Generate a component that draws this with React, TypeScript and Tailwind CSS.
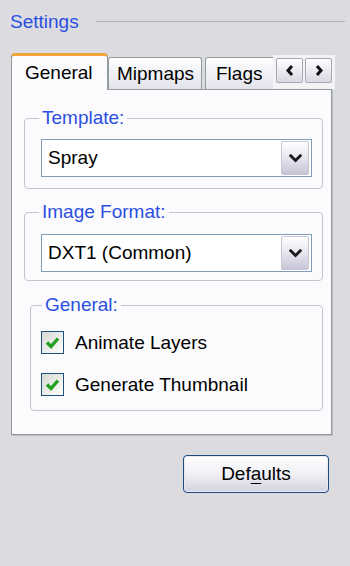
import React from "react";

function Chevron() {
  return (
    <svg width="13" height="9" viewBox="0 0 13 9">
      <path d="M1.8 1.8 L6.5 6.5 L11.2 1.8" fill="none" stroke="#1b1b1b" strokeWidth="2.8" strokeLinecap="square" />
    </svg>
  );
}

function Combo({ value }: { value: string }) {
  return (
    <div className="h-[38px] border border-[#7f9db9] bg-white flex items-center">
      <span className="flex-1 pl-[6px]">{value}</span>
      <div className="w-[28px] h-[34px] mr-[2px] rounded-[2px] border border-[#c6c6d6] bg-gradient-to-b from-[#ffffff] via-[#e6e6ef] to-[#c5c5d6] flex items-center justify-center">
        <Chevron />
      </div>
    </div>
  );
}

function Check({ label }: { label: string }) {
  return (
    <div className="flex items-center h-[23px]">
      <div className="w-[23px] h-[23px] border border-[#1c5180] bg-gradient-to-br from-[#d8d8d2] to-[#ffffff] flex items-center justify-center">
        <svg width="17" height="15" viewBox="0 0 17 15">
          <path d="M3 7.5 L7 11.5 L14 3.5" fill="none" stroke="#21a121" strokeWidth="3.4" />
        </svg>
      </div>
      <span className="ml-[11px]">{label}</span>
    </div>
  );
}

function ArrowBtn({ dir }: { dir: "l" | "r" }) {
  return (
    <div className="w-[27px] h-[25px] rounded-[2px] border border-[#a7a6b2] bg-gradient-to-b from-[#ffffff] to-[#d9d9e3] flex items-center justify-center">
      <svg width="10" height="13" viewBox="0 0 10 13">
        {dir === "l" ? (
          <path d="M7 2 L3 6.5 L7 11" fill="none" stroke="#111" strokeWidth="3" strokeLinejoin="miter" />
        ) : (
          <path d="M3 2 L7 6.5 L3 11" fill="none" stroke="#111" strokeWidth="3" strokeLinejoin="miter" />
        )}
      </svg>
    </div>
  );
}

export default function App() {
  return (
    <div className="w-[350px] h-[566px] bg-[#dcdce0] font-['Liberation_Sans',Arial,sans-serif] text-[19px] leading-[22px] text-black overflow-hidden">
      {/* header */}
      <div className="flex items-start pt-[11px] pl-[10px]">
        <span className="text-[#2b4fe0]">Settings</span>
        <div className="flex-1 h-px bg-[#b0b0b6] mt-[10px] ml-[17px] mr-[5px]" />
      </div>

      {/* tabs */}
      <div className="relative z-10 mt-[20px] -mb-px ml-[11px] w-[321px] h-[37px] flex items-end">
        <div className="w-[97px] h-[37px] bg-[#fbfbfd] border-x border-x-[#919b9c] border-t-[3px] border-t-[#f0a439] rounded-t-[4px] pl-[13px] pt-[6px]">
          General
        </div>
        <div className="w-[94px] h-[32px] mb-px border-x border-t border-[#919b9c] rounded-t-[3px] bg-gradient-to-b from-[#ffffff] to-[#e3e3ec] pl-[8px] pt-[5px]">
          Mipmaps
        </div>
        <div className="ml-[3px] w-[82px] h-[32px] mb-px border-x border-t border-[#919b9c] rounded-t-[3px] bg-gradient-to-b from-[#ffffff] to-[#e3e3ec] pl-[10px] pt-[5px]">
          Flags
        </div>
        <div className="absolute left-[262px] top-[2px] w-[62px] h-[34px] bg-[#f3f3f5] flex items-start pt-[3px] pl-[3px] gap-[2px]">
          <ArrowBtn dir="l" />
          <ArrowBtn dir="r" />
        </div>
      </div>

      {/* panel */}
      <div className="ml-[11px] w-[321px] h-[346px] border border-[#919b9c] bg-[#fbfbfd] shadow-[1px_1px_0_#b9bec0] flex flex-col">
        <fieldset className="mt-[18px] ml-[12px] mr-[8px] border border-[#c4c4cb] rounded-[4px]">
          <legend className="ml-[14px] px-[3px] leading-[20px] text-[#2b4fe0]">Template:</legend>
          <div className="pl-[16px] pr-[10px] pt-[11px] pb-[11px]">
            <Combo value="Spray" />
          </div>
        </fieldset>

        <fieldset className="mt-[13px] ml-[12px] mr-[8px] border border-[#c4c4cb] rounded-[4px]">
          <legend className="ml-[14px] px-[3px] leading-[20px] text-[#2b4fe0]">Image Format:</legend>
          <div className="pl-[16px] pr-[10px] pt-[12px] pb-[8px]">
            <Combo value="DXT1 (Common)" />
          </div>
        </fieldset>

        <fieldset className="mt-[14px] ml-[18px] mr-[8px] border border-[#c4c4cb] rounded-[4px]">
          <legend className="ml-[11px] px-[3px] leading-[20px] text-[#2b4fe0]">General:</legend>
          <div className="pl-[10px] pt-[16px] pb-[14px] flex flex-col gap-[19px]">
            <Check label="Animate Layers" />
            <Check label="Generate Thumbnail" />
          </div>
        </fieldset>
      </div>

      {/* button */}
      <div className="mt-[20px] ml-[183px] w-[146px] h-[38px] rounded-[4px] border border-[#1f4a7c] bg-gradient-to-b from-[#ffffff] via-[#f0f0f5] to-[#d3d3e0] flex items-center justify-center shadow-[inset_0_0_0_1px_#e8e8f0]">
        <span>
          Def<span className="underline underline-offset-[3px]">a</span>ults
        </span>
      </div>
    </div>
  );
}
